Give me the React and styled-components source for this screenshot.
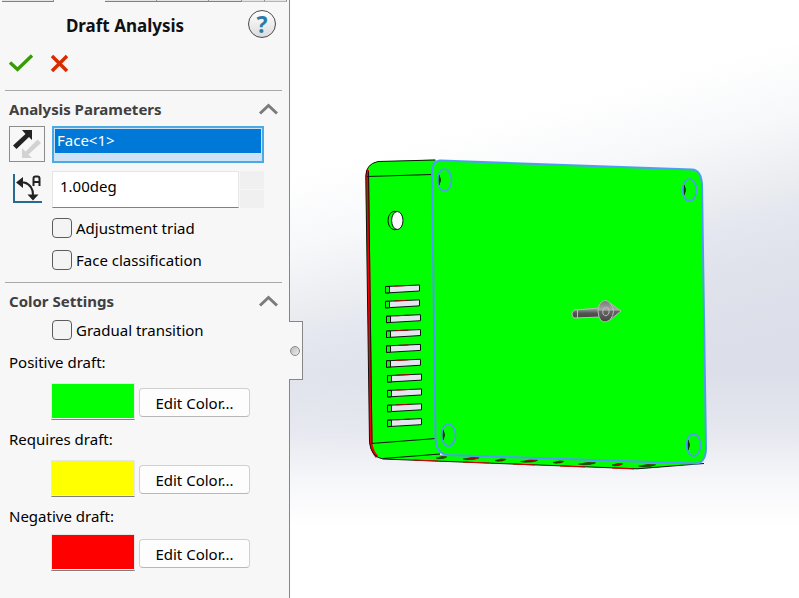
import React, { useState } from "react";
import styled, { createGlobalStyle } from "styled-components";

const GlobalStyle = createGlobalStyle`
  *, *::before, *::after { box-sizing: border-box; }
  body { margin: 0; background: #fff; }
  body, button, input { font-family: "Noto Sans", "Open Sans", sans-serif; font-size: 15px; }
`;

const Page = styled.div`
  display: flex;
  min-height: 100vh;
`;

const Panel = styled.aside`
  position: relative;
  z-index: 1;
  flex: 0 0 290px;
  background: #f7f7f7;
  border-right: 1px solid #868686;
  color: #000;
`;

const TabStrip = styled.div`
  display: grid;
  grid-template-columns: 52px 51px 52px 52px 33px 23px 22px;
  height: 2px;
  padding-left: 2px;
`;

const TabEdge = styled.span`
  background: ${(p) => (p.$active ? "transparent" : "#e4e4e4")};
  border-bottom: 1px solid ${(p) => (p.$active ? "transparent" : p.$faint ? "#b4b4b4" : "#808080")};
  border-right: 1px solid ${(p) => (p.$active ? "transparent" : "#909090")};
`;

const Header = styled.header`
  display: grid;
  grid-template-columns: 1fr 28px;
  align-items: center;
  height: 44px;
  padding: 0 13px 0 0;
`;

const Title = styled.h1`
  margin: 4px 0 0;
  padding-left: 2px;
  text-align: center;
  font-size: 17px;
  line-height: 24px;
  font-weight: 700;
  color: #111;
`;

const HelpButton = styled.button`
  width: 28px;
  height: 28px;
  padding: 0;
  border: 1px solid #4a4a4a;
  border-radius: 50%;
  background: linear-gradient(#fff, #dcdcdc);
  color: #2a7ca6;
  font-size: 23px;
  line-height: 24px;
  font-weight: 700;
`;

const Actions = styled.div`
  display: flex;
  gap: 12px;
  height: 44px;
  padding: 4px 0 0 7px;
`;

const IconButton = styled.button`
  width: 27px;
  height: 27px;
  padding: 0;
  border: 0;
  background: transparent;
  svg { display: block; }
`;

const ToggleButton = styled(IconButton)`
  width: 20px;
  height: 14px;
  margin-right: 4px;
`;

const Section = styled.section`
  margin: 0 7px 0 5px;
  padding: 0 0 0 4px;
  border-top: 1px solid #a8a8a8;
`;

const SectionHead = styled.div`
  display: flex;
  align-items: center;
  justify-content: space-between;
  height: 35px;
`;

const SectionTitle = styled.h2`
  margin: 0;
  font-size: 15px;
  line-height: 20px;
  font-weight: 700;
  color: #404040;
`;

const ParamRow = styled.div`
  display: grid;
  grid-template-columns: 36px 1fr;
  gap: 7px;
  height: 37px;
  margin: 0 18px 8px 0;
`;

const ReverseButton = styled.button`
  width: 36px;
  height: 36px;
  padding: 0;
  border: 1px solid #8c8c8c;
  background: #f7f7f7;
  svg { display: block; }
`;

const Selection = styled.ul`
  margin: 0;
  padding: 1px 1px 4px;
  list-style: none;
  background: #cde2f7;
  border: 2px solid #4ba9e3;
`;

const SelectedItem = styled.li`
  height: 24px;
  padding-left: 2px;
  background: #0078d7;
  color: #fff;
  line-height: 22px;
`;

const Spin = styled.div`
  display: grid;
  grid-template-columns: 1fr 25px;
`;

const AngleInput = styled.input`
  min-width: 0;
  padding: 0 7px 8px;
  border: 1px solid #e6e6e6;
  border-bottom-color: #808080;
  background: #fff;
  color: #000;
`;

const Steps = styled.div`
  display: grid;
  gap: 1px;
  padding-left: 1px;
`;

const StepButton = styled.button`
  border: 0;
  padding: 0;
  background: #f0f0f0;
`;

const Options = styled.div`
  display: grid;
  gap: 12px;
  padding: 2px 0 12px 43px;
`;

const Option = styled.label`
  display: flex;
  align-items: center;
  gap: 4px;
  height: 20px;
  line-height: 20px;
`;

const Check = styled.input`
  appearance: none;
  width: 20px;
  height: 20px;
  margin: 0;
  border: 1px solid #5c5c5c;
  border-radius: 4px;
  background: #f4f4f4;
  &:checked { background: #0078d7; }
`;

const DraftGroup = styled.div`
  margin-bottom: 9px;
`;

const DraftLabel = styled.div`
  height: 20px;
  line-height: 20px;
  margin-bottom: ${(p) => (p.$tight ? "8px" : "11px")};
`;

const DraftRow = styled.div`
  display: flex;
  align-items: center;
  gap: 4px;
  height: 37px;
  padding-left: 42px;
`;

const Swatch = styled.span`
  width: 84px;
  height: 37px;
  padding: 0 0 1px;
  border: 1px solid #e6e6e6;
  border-bottom-color: #808080;
  background-color: #fff;
  background-image: linear-gradient(${(p) => p.$color}, ${(p) => p.$color});
  background-clip: border-box, content-box;
  background-clip: content-box;
`;

const EditButton = styled.button`
  width: 111px;
  height: 29px;
  margin-top: 2px;
  padding: 0;
  border: 1px solid #d0d0d0;
  border-bottom-color: #b8b8b8;
  border-radius: 4px;
  background: #fdfdfd;
  color: #000;
`;

const Handle = styled.button`
  position: absolute;
  left: 289px;
  top: 321px;
  width: 14px;
  height: 59px;
  padding: 0 0 0 1px;
  border: 1px solid #868686;
  border-left: 0;
  background: #f7f7f7;
  &::before {
    content: "";
    display: block;
    width: 10px;
    height: 10px;
    border: 1px solid #8a8a8a;
    border-radius: 50%;
    background: linear-gradient(135deg, #bbb, #eee);
  }
`;

const Viewport = styled.main`
  flex: 1;
  min-width: 0;
  display: flex;
  background:
    linear-gradient(to bottom, rgba(255,255,255,0) 62%, rgba(255,255,255,.28) 72%, rgba(255,255,255,.75) 80%, #fff 88%),
    linear-gradient(165deg, #fff 24%, #f7f8fa 34%, #eaecf0 43%, #e4e7ef 47%, #dfe2eb 54%, #dcdee9 64%);
`;

const Drawing = styled.svg`
  display: block;
  width: 100%;
  height: auto;
`;

function Chevron() {
  return (
    <svg width="20" height="14" viewBox="0 0 20 14">
      <path d="M2 11.500 10.500 3.500l8.500 8" fill="none" stroke="#7c7c7c" strokeWidth="3" />
    </svg>
  );
}

function ReverseIcon() {
  return (
    <svg width="34" height="34" viewBox="0 0 34 34">
      <path d="M12 31V21l3.500 3.500L27.500 12.500 31 16 18.500 27.500 22 31z" fill="#d2d2d2" />
      <path d="M12 3H22V13L19 10 6.500 22 3 18.500 15.500 7z" fill="#222" />
    </svg>
  );
}

function AngleIcon() {
  return (
    <svg width="36" height="36" viewBox="0 0 36 36">
      <path d="M5 3v28h28" fill="none" stroke="#246c91" strokeWidth="2" />
      <path d="M10 11.500h5c6 1 9.500 7 9 13" fill="none" stroke="#222" strokeWidth="2" />
      <path d="M7 11.500l7-5.500v11zM24 29.500l-5.500-6h11z" fill="#222" />
      <path d="M24.500 15V7.500q0-2 2-2h2q2 0 2 2V15M24.500 11h6" fill="none" stroke="#222" strokeWidth="2" />
    </svg>
  );
}

function ParameterSection({ title, children }) {
  const [open, setOpen] = useState(true);
  return (
    <Section>
      <SectionHead>
        <SectionTitle>{title}</SectionTitle>
        <ToggleButton aria-label={`Toggle ${title}`} aria-expanded={open} onClick={() => setOpen(!open)}>
          <Chevron />
        </ToggleButton>
      </SectionHead>
      {open && children}
    </Section>
  );
}

const drafts = [
  { name: "Positive draft:", color: "#00ff00" },
  { name: "Requires draft:", color: "#ffff00" },
  { name: "Negative draft:", color: "#ff0000", tight: true },
];

const slots = Array.from({ length: 10 }, (_, i) => ({
  x: 385.5 + Math.round(i * 0.25),
  y: 286.5 + i * 14.85,
}));

const bosses = [[444, 180], [689, 190], [448, 435], [693, 445]];

const ports = [
  [442, 457.5, 12], [472, 458.5, 18], [501, 460, 12], [530, 461, 19],
  [559, 462, 12], [588, 463.5, 19], [618, 464.5, 12], [648, 465.5, 19],
];

function Model() {
  return (
    <Drawing viewBox="290 0 509 598" role="img" aria-label="Enclosure model with draft colors">
      <defs>
        <linearGradient id="shaft" x1="0" y1="0" x2="0" y2="1">
          <stop offset="0" stopColor="#aaa" />
          <stop offset=".5" stopColor="#555" />
          <stop offset="1" stopColor="#444" />
        </linearGradient>
        <linearGradient id="tip" x1="0" y1="0" x2="0" y2="1">
          <stop offset="0" stopColor="#777" />
          <stop offset=".45" stopColor="#a8a8a8" />
          <stop offset=".5" stopColor="#666" />
          <stop offset="1" stopColor="#444" />
        </linearGradient>
      </defs>

      <path d="M378 161.500 436 159.500 440 455 704 463 640 469 382 459Q370 455 370 444L365.500 176Q366 164 378 161.500Z" fill="#0f0" />
      <path d="M367.500 170 371 444Q372.500 452 377 457" fill="none" stroke="#f00000" strokeWidth="3" />
      <path d="M435 160 378 161.500Q366 164 365.800 176L369.500 442Q371 457 383 459L637 468.800 704 463.500" fill="none" stroke="#111" />
      <path d="M368.500 171 372 444M367 176.500 432 174.500M371 443.500 436 438.500M383 458.500 440 454" fill="none" stroke="#111" />
      <path d="M414 460 438 461M463 462 489 463M513 464 535 465M560 466 585 467M612 468 634 469" stroke="#e00000" />

      {ports.map(([x, y, w]) => (
        <g key={x}>
          <path d={`M${x - w / 2} ${y + 0.5}l${w / 5}-.5 ${w * 0.3}-1 ${w * 0.4} .3-${w * 0.1} .8-${w * 0.2} .8-${w * 0.4} .3z`} fill="#173500" stroke="#173500" strokeWidth=".6" />
          <path d={`M${x - w / 5} ${y - 0.2}h${w / 2}`} stroke="#c80000" />
        </g>
      ))}

      <ellipse cx="394.500" cy="220.500" rx="6.500" ry="9.200" fill="#0f0" stroke="#111" />
      <ellipse cx="397.300" cy="220.500" rx="5.700" ry="9" fill="#fafafc" stroke="#111" />

      {slots.map(({ x, y }) => (
        <g key={y}>
          <path d={`M${x} ${y}l34-1.500v6l-34 2z`} fill="#e4e7ef" stroke="#111" />
          <path d={`M${x} ${y}h4v6.300l-4 .2z`} fill="#0f0" stroke="#111" />
          <path d={`M${x + 9} ${y - 0.4}l13-.6`} stroke="#b00000" />
        </g>
      ))}

      <path d="M441 160.500 692 169.500Q701 170 702 184L706 449Q705.500 463.500 695 463.500L448 455Q436 454 435.500 438L432 174Q432 160 441 160.500Z" fill="#0f0" stroke="#4f9df2" strokeWidth="2" />

      {bosses.map(([x, y]) => (
        <g key={x}>
          <path d={`M${x - 5} ${y - 5}q3 5 0 10z`} fill="#063d00" stroke="#063d00" />
          <ellipse cx={x + 0.5} cy={y} rx="7" ry="11" fill="none" stroke="#4f9df2" strokeWidth="1.700" />
        </g>
      ))}

      <path d="M574 310 600 308v9l-26 1q-4-4 0-8z" fill="url(#shaft)" stroke="#bcbcbc" />
      <path d="M599 305q5-8 11-2l11 8-11 9q-8 5-11-3-2-6 0-12z" fill="url(#tip)" stroke="#b8b8b8" />
      <path d="M577.500 310v8M604 308q6-2 5 5-3 5-6 1-1-3 1-6M610 303q7 8 0 17" fill="none" stroke="#bcbcbc" />
    </Drawing>
  );
}

export default function App() {
  return (
    <Page>
      <GlobalStyle />
      <Panel>
        <TabStrip>
          <TabEdge />
          <TabEdge $active />
          <TabEdge />
          <TabEdge />
          <TabEdge />
          <TabEdge $faint />
          <TabEdge $faint />
        </TabStrip>
        <Header>
          <Title>Draft Analysis</Title>
          <HelpButton aria-label="Help">?</HelpButton>
        </Header>
        <Actions>
          <IconButton aria-label="OK">
            <svg width="27" height="27" viewBox="0 0 27 27">
              <path d="M3 12.500 10.500 19.500 25 5.500" fill="none" stroke="#389b08" strokeWidth="3.400" />
            </svg>
          </IconButton>
          <IconButton aria-label="Cancel">
            <svg width="27" height="27" viewBox="0 0 27 27">
              <path d="M6 6 21 21M21 6 6 21" fill="none" stroke="#dc2a00" strokeWidth="3.500" />
            </svg>
          </IconButton>
        </Actions>

        <ParameterSection title="Analysis Parameters">
          <ParamRow>
            <ReverseButton aria-label="Reverse direction"><ReverseIcon /></ReverseButton>
            <Selection role="listbox" aria-label="Direction of pull">
              <SelectedItem role="option" aria-selected="true">{"Face<1>"}</SelectedItem>
            </Selection>
          </ParamRow>
          <ParamRow>
            <AngleIcon />
            <Spin>
              <AngleInput aria-label="Draft angle" defaultValue="1.00deg" />
              <Steps>
                <StepButton aria-label="Increase angle" />
                <StepButton aria-label="Decrease angle" />
              </Steps>
            </Spin>
          </ParamRow>
          <Options>
            <Option><Check type="checkbox" />Adjustment triad</Option>
            <Option><Check type="checkbox" />Face classification</Option>
          </Options>
        </ParameterSection>

        <ParameterSection title="Color Settings">
          <Options>
            <Option><Check type="checkbox" />Gradual transition</Option>
          </Options>
          {drafts.map((d) => (
            <DraftGroup key={d.name}>
              <DraftLabel $tight={d.tight}>{d.name}</DraftLabel>
              <DraftRow>
                <Swatch $color={d.color} />
                <EditButton aria-label={`Edit Color... ${d.name}`}>Edit Color...</EditButton>
              </DraftRow>
            </DraftGroup>
          ))}
        </ParameterSection>
        <Handle aria-label="Collapse panel" />
      </Panel>
      <Viewport>
        <Model />
      </Viewport>
    </Page>
  );
}
